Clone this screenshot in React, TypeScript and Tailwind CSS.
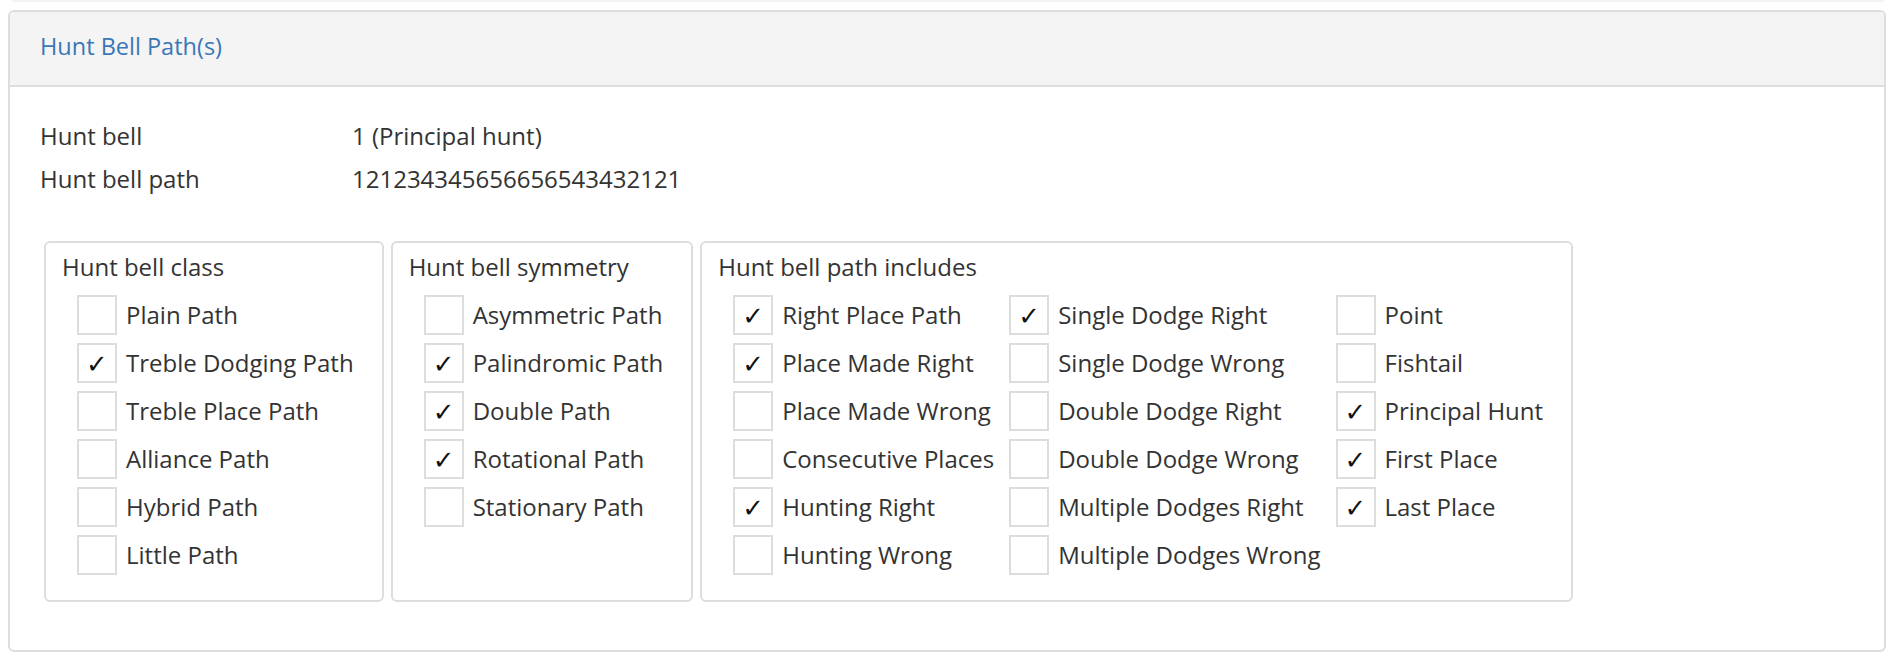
import React from "react";

type Item = { label: string; checked: boolean };

function Check({ item }: { item: Item }) {
  return (
    <div className="flex items-center h-[40px] mb-[8px]">
      <div className="w-[40px] h-[40px] border-2 border-[#dddddd] bg-white flex items-center justify-center shrink-0">
        {item.checked && (
          <span className="text-[26px] leading-none text-[#111] pt-[2px]" style={{ fontFamily: '"DejaVu Sans", sans-serif' }}>
            ✓
          </span>
        )}
      </div>
      <span className="ml-[9px] whitespace-nowrap">{item.label}</span>
    </div>
  );
}

function Group({ title, columns }: { title: string; columns: Item[][] }) {
  return (
    <div className="border-2 border-[#dddddd] rounded-[6px] pl-[16px] pt-[8px] pb-[17px] pr-[28px]">
      <div className="leading-[32px] mb-[12px] whitespace-nowrap">{title}</div>
      <div className="flex pl-[15px] gap-x-[15px]">
        {columns.map((col, i) => (
          <div key={i} className="flex flex-col">
            {col.map((it) => (
              <Check key={it.label} item={it} />
            ))}
          </div>
        ))}
      </div>
    </div>
  );
}

const c = (label: string, checked = false): Item => ({ label, checked });

export default function App() {
  return (
    <div className="bg-white w-[1896px] h-[660px] text-[#333333] text-[24px]" style={{ fontFamily: '"Open Sans", sans-serif' }}>
      <div className="mx-[12px] h-[2px] bg-[#f3f3f3]" />
      <div className="ml-[8px] mt-[8px] w-[1878px] h-[642px] border-2 border-[#dddddd] rounded-[6px] overflow-hidden">
        <div className="h-[75px] bg-[#f4f4f4] border-b-2 border-[#dddddd] flex items-center pl-[30px] pb-[3px]">
          <span className="text-[#3a77b6] leading-none text-[23.5px]">Hunt Bell Path(s)</span>
        </div>
        <div className="pl-[30px] pt-[27px]">
          <div className="flex leading-[43px]">
            <div className="w-[312px]">Hunt bell</div>
            <div>1 (Principal hunt)</div>
          </div>
          <div className="flex leading-[43px]">
            <div className="w-[312px]">Hunt bell path</div>
            <div>121234345656656543432121</div>
          </div>
          <div className="flex gap-[7px] mt-[41px] ml-[4px] items-stretch">
            <Group
              title="Hunt bell class"
              columns={[
                [
                  c("Plain Path"),
                  c("Treble Dodging Path", true),
                  c("Treble Place Path"),
                  c("Alliance Path"),
                  c("Hybrid Path"),
                  c("Little Path"),
                ],
              ]}
            />
            <Group
              title="Hunt bell symmetry"
              columns={[
                [
                  c("Asymmetric Path"),
                  c("Palindromic Path", true),
                  c("Double Path", true),
                  c("Rotational Path", true),
                  c("Stationary Path"),
                ],
              ]}
            />
            <Group
              title="Hunt bell path includes"
              columns={[
                [
                  c("Right Place Path", true),
                  c("Place Made Right", true),
                  c("Place Made Wrong"),
                  c("Consecutive Places"),
                  c("Hunting Right", true),
                  c("Hunting Wrong"),
                ],
                [
                  c("Single Dodge Right", true),
                  c("Single Dodge Wrong"),
                  c("Double Dodge Right"),
                  c("Double Dodge Wrong"),
                  c("Multiple Dodges Right"),
                  c("Multiple Dodges Wrong"),
                ],
                [
                  c("Point"),
                  c("Fishtail"),
                  c("Principal Hunt", true),
                  c("First Place", true),
                  c("Last Place", true),
                ],
              ]}
            />
          </div>
        </div>
      </div>
    </div>
  );
}
